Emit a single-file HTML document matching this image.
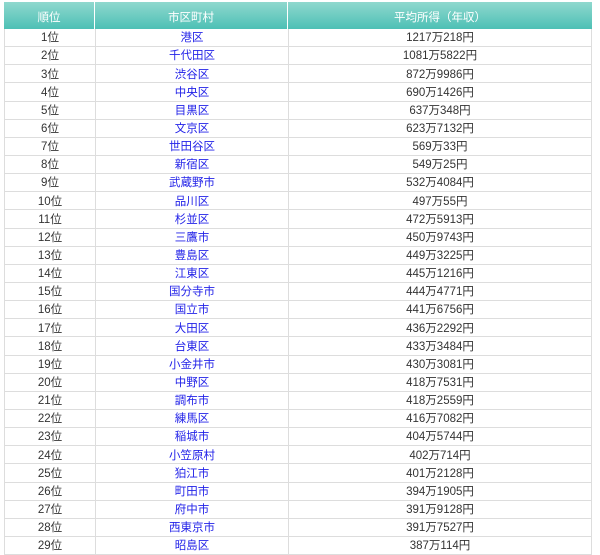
<!DOCTYPE html>
<html><head><meta charset="utf-8"><style>
body{margin:0;background:#fff;font-family:"Liberation Sans","Noto Sans CJK JP",sans-serif;font-size:11.5px;color:#333;overflow:hidden;width:600px;height:549px}
.t{position:absolute;left:4px;top:2px;width:588px}
.h,.r{display:flex}
.h{height:27px;background:linear-gradient(#8fd8ce,#4dc0b5);color:#fff;font-size:11.5px}
.h div{border-right:1px solid #fff;display:flex;align-items:center;justify-content:center;padding-top:2px;box-sizing:border-box}
.r{height:17.15px;border-bottom:1px solid #ddd}
.r div{border-left:1px solid #ddd;display:flex;align-items:center;justify-content:center;line-height:1;padding-top:3px;box-sizing:border-box}
.r div:last-child{border-right:1px solid #ddd}
.a{width:91px}.b{width:193px}.c{flex:1}
.r .b{color:#2323e8}
</style></head><body><div class="t">
<div class="h"><div class="a">順位</div><div class="b">市区町村</div><div class="c" style="border-right:none">平均所得（年収）</div></div>
<div class="r"><div class="a">1位</div><div class="b">港区</div><div class="c">1217万218円</div></div>
<div class="r"><div class="a">2位</div><div class="b">千代田区</div><div class="c">1081万5822円</div></div>
<div class="r"><div class="a">3位</div><div class="b">渋谷区</div><div class="c">872万9986円</div></div>
<div class="r"><div class="a">4位</div><div class="b">中央区</div><div class="c">690万1426円</div></div>
<div class="r"><div class="a">5位</div><div class="b">目黒区</div><div class="c">637万348円</div></div>
<div class="r"><div class="a">6位</div><div class="b">文京区</div><div class="c">623万7132円</div></div>
<div class="r"><div class="a">7位</div><div class="b">世田谷区</div><div class="c">569万33円</div></div>
<div class="r"><div class="a">8位</div><div class="b">新宿区</div><div class="c">549万25円</div></div>
<div class="r"><div class="a">9位</div><div class="b">武蔵野市</div><div class="c">532万4084円</div></div>
<div class="r"><div class="a">10位</div><div class="b">品川区</div><div class="c">497万55円</div></div>
<div class="r"><div class="a">11位</div><div class="b">杉並区</div><div class="c">472万5913円</div></div>
<div class="r"><div class="a">12位</div><div class="b">三鷹市</div><div class="c">450万9743円</div></div>
<div class="r"><div class="a">13位</div><div class="b">豊島区</div><div class="c">449万3225円</div></div>
<div class="r"><div class="a">14位</div><div class="b">江東区</div><div class="c">445万1216円</div></div>
<div class="r"><div class="a">15位</div><div class="b">国分寺市</div><div class="c">444万4771円</div></div>
<div class="r"><div class="a">16位</div><div class="b">国立市</div><div class="c">441万6756円</div></div>
<div class="r"><div class="a">17位</div><div class="b">大田区</div><div class="c">436万2292円</div></div>
<div class="r"><div class="a">18位</div><div class="b">台東区</div><div class="c">433万3484円</div></div>
<div class="r"><div class="a">19位</div><div class="b">小金井市</div><div class="c">430万3081円</div></div>
<div class="r"><div class="a">20位</div><div class="b">中野区</div><div class="c">418万7531円</div></div>
<div class="r"><div class="a">21位</div><div class="b">調布市</div><div class="c">418万2559円</div></div>
<div class="r"><div class="a">22位</div><div class="b">練馬区</div><div class="c">416万7082円</div></div>
<div class="r"><div class="a">23位</div><div class="b">稲城市</div><div class="c">404万5744円</div></div>
<div class="r"><div class="a">24位</div><div class="b">小笠原村</div><div class="c">402万714円</div></div>
<div class="r"><div class="a">25位</div><div class="b">狛江市</div><div class="c">401万2128円</div></div>
<div class="r"><div class="a">26位</div><div class="b">町田市</div><div class="c">394万1905円</div></div>
<div class="r"><div class="a">27位</div><div class="b">府中市</div><div class="c">391万9128円</div></div>
<div class="r"><div class="a">28位</div><div class="b">西東京市</div><div class="c">391万7527円</div></div>
<div class="r"><div class="a">29位</div><div class="b">昭島区</div><div class="c">387万114円</div></div>
</div></body></html>
